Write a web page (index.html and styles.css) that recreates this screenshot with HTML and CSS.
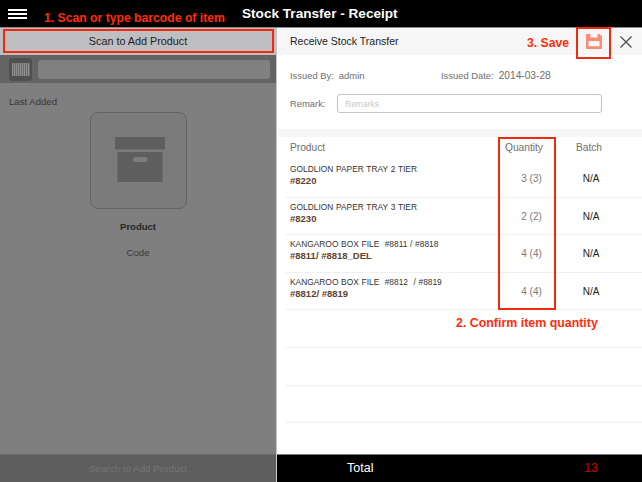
FILE: index.html
```html
<!DOCTYPE html>
<html lang="en">
<head>
<meta charset="utf-8">
<title>Stock Transfer - Receipt</title>
<link rel="stylesheet" href="styles.css">
</head>
<body>
<div class="app">
  <header class="topbar">
    <div class="menu"><span></span><span></span><span></span></div>
    <div class="title">Stock Transfer - Receipt</div>
  </header>
  <div class="main">
    <section class="left">
      <div class="scan-btn">Scan to Add Product</div>
      <div class="search-strip">
        <div class="barcode-btn"><div class="barcode"></div></div>
        <div class="search-field"></div>
      </div>
      <div class="last">
        <div class="last-label">Last Added</div>
        <div class="card">
          <svg class="box" viewBox="0 0 50 45" width="50" height="45">
            <rect x="0" y="0" width="50" height="12.500" fill="#5e5e5e"/>
            <rect x="2.500" y="15" width="45" height="30" fill="#5e5e5e"/>
            <rect x="18" y="20" width="14.500" height="5" rx="2.500" fill="#7d7d7d"/>
          </svg>
        </div>
        <div class="prod-name">Product</div>
        <div class="prod-code">Code</div>
      </div>
      <div class="search-bottom">Search to Add Product</div>
    </section>
    <section class="right">
      <div class="subhead">
        <div class="subhead-title">Receive Stock Transfer</div>
        <svg class="save" viewBox="0 0 16 15" width="16" height="15">
          <path d="M1 0 H4.500 V3.500 H11.500 V0 H13.500 L16 2.500 V14 A1 1 0 0 1 15 15 H1 A1 1 0 0 1 0 14 V1 A1 1 0 0 1 1 0 Z M2.500 7 V12.300 H13.500 V7 Z" fill="#f98c75" fill-rule="evenodd"/>
        </svg>
        <svg class="close" viewBox="0 0 12 12" width="12" height="12">
          <path d="M0.500 0.500 L11.500 11.500 M11.500 0.500 L0.500 11.500" stroke="#4a4a4a" stroke-width="1.200" fill="none"/>
        </svg>
      </div>
      <div class="info">
        <div class="info-row">
          <div class="issued-by"><span class="lbl">Issued By:</span><span class="val">admin</span></div>
          <div class="issued-date"><span class="lbl">Issued Date:</span><span class="val val-date">2014-03-28</span></div>
        </div>
        <div class="remark-row">
          <span class="lbl remark-lbl">Remark:</span>
          <div class="remark-input">Remarks</div>
        </div>
      </div>
      <div class="band"></div>
      <div class="table">
        <div class="thead">
          <div class="c-prod">Product</div>
          <div class="c-qty">Quantity</div>
          <div class="c-batch">Batch</div>
        </div>
        <div class="row">
          <div class="c-prod"><div class="pname">GOLDLION PAPER TRAY 2 TIER</div><div class="pcode">#8220</div></div>
          <div class="c-qty qty">3 (3)</div>
          <div class="c-batch batch">N/A</div>
        </div>
        <div class="row">
          <div class="c-prod"><div class="pname">GOLDLION PAPER TRAY 3 TIER</div><div class="pcode">#8230</div></div>
          <div class="c-qty qty">2 (2)</div>
          <div class="c-batch batch">N/A</div>
        </div>
        <div class="row">
          <div class="c-prod"><div class="pname">KANGAROO BOX FILE &nbsp;#8811 / #8818</div><div class="pcode">#8811/ #8818_DEL</div></div>
          <div class="c-qty qty">4 (4)</div>
          <div class="c-batch batch">N/A</div>
        </div>
        <div class="row">
          <div class="c-prod"><div class="pname">KANGAROO BOX FILE &nbsp;#8812 &nbsp;/ #8819</div><div class="pcode">#8812/ #8819</div></div>
          <div class="c-qty qty">4 (4)</div>
          <div class="c-batch batch">N/A</div>
        </div>
        <div class="row"></div>
        <div class="row"></div>
        <div class="row"></div>
      </div>
      <div class="total-bar">
        <div class="total-lbl">Total</div>
        <div class="total-val">13</div>
      </div>
    </section>
  </div>
  <div class="note note-1">1. Scan or type barcode of item</div>
  <div class="note note-2">2. Confirm item quantity</div>
  <div class="note note-3">3. Save</div>
  <div class="mark mark-scan"></div>
  <div class="mark mark-qty"></div>
  <div class="mark mark-save"></div>
</div>
</body>
</html>
```
FILE: styles.css
```css
* { box-sizing: border-box; }
html, body { margin: 0; padding: 0; }
body { width: 642px; height: 482px; overflow: hidden; background: #fff; font-family: "Liberation Sans", Arial, sans-serif; }
.app { position: relative; width: 642px; height: 482px; display: flex; flex-direction: column; }

.topbar { height: 27px; background: #000; position: relative; flex: none; }
.menu { position: absolute; left: 8px; top: 9px; width: 19px; display: flex; flex-direction: column; gap: 2px; }
.menu span { display: block; height: 2px; background: #fff; }
.title { position: absolute; left: 242px; top: 6px; font-size: 13.600px; font-weight: 700; line-height: 16px; color: #fff; white-space: nowrap; }

.main { display: flex; flex: 1; min-height: 0; border-top: 1px solid #8a8a8a; }
.left { width: 276px; flex: none; display: flex; flex-direction: column; background: #7f7f7f; }
.scan-btn { height: 27px; padding-bottom: 1px; background: #bfbec0; color: #222; font-size: 10.800px; display: flex; align-items: center; justify-content: center; }
.search-strip { height: 28px; background: #646464; display: flex; align-items: center; padding-left: 9px; gap: 6px; }
.barcode-btn { width: 23px; height: 23px; background: #505050; border-radius: 3px; display: flex; align-items: center; justify-content: center; flex: none; }
.barcode { width: 18px; height: 13px; background: repeating-linear-gradient(90deg, #8f8f8f 0 1px, #6c6c6c 1px 2px); }
.search-field { width: 232px; height: 19px; background: #808080; border-radius: 3px; flex: none; }
.last { flex: 1; position: relative; display: flex; flex-direction: column; align-items: center; }
.last-label { align-self: flex-start; margin: 13px 0 0 9px; font-size: 9.600px; line-height: 12px; color: #363636; }
.card { width: 97px; height: 97px; margin-top: 4px; border: 1px solid #646464; border-radius: 8px; background: #7b7b7b; display: flex; align-items: center; justify-content: center; }
.box { display: block; margin-left: 4px; margin-bottom: 2px; }
.prod-name { margin-top: 12px; font-size: 9.500px; font-weight: 700; line-height: 12px; color: #262626; }
.prod-code { margin-top: 14px; font-size: 9.700px; line-height: 12px; color: #3c3c3c; }
.search-bottom { height: 28px; flex: none; background: #5e5e5e; border-top: 1px solid #6d6d6d; color: #747474; font-size: 9.800px; display: flex; align-items: center; justify-content: center; }

.right { flex: 1; min-width: 0; display: flex; flex-direction: column; border-left: 1px solid #c8c8c8; background: #fff; position: relative; }
.subhead { height: 27px; padding: 0 0 1px 13px; background: #f6f6f6; position: relative; display: flex; align-items: center; flex: none; }
.subhead-title { font-size: 10.500px; color: #222; }
.save { position: absolute; left: 309px; top: 6px; }
.close { position: absolute; left: 343px; top: 8px; }
.info { height: 74px; flex: none; padding: 15px 0 0 13px; font-size: 9.400px; color: #6f6f6f; }
.info-row { display: flex; line-height: 12px; }
.issued-by { width: 151px; }
.lbl { color: #6f6f6f; }
.val { margin-left: 5px; color: #6f6f6f; font-size: 9.500px; }
.val-date { font-size: 10.200px; }
.remark-row { margin-top: 12px; display: flex; align-items: center; }
.remark-lbl { width: 47px; flex: none; }
.remark-input { width: 265px; height: 19px; border: 1px solid #c4c4c4; border-radius: 3px; color: #c9c9c9; font-size: 8.500px; padding-left: 7px; display: flex; align-items: center; }
.band { height: 8px; background: #f6f6f6; flex: none; }

.table { flex: 1; min-height: 0; padding-left: 9px; }
.thead { height: 23px; padding-bottom: 2px; display: flex; align-items: center; font-size: 10.200px; color: #6f6f6f; }
.row { height: 37.600px; display: flex; border-bottom: 1px solid #efefef; }
.c-prod { width: 218px; padding-left: 4px; flex: none; }
.c-qty { width: 57px; text-align: center; flex: none; }
.c-batch { width: 64px; text-align: center; flex: none; }
.thead .c-qty { padding-right: 17px; }
.thead .c-batch { padding-right: 8px; }
.pname { font-size: 8.400px; line-height: 12px; color: #333; white-space: nowrap; margin-top: 3px; word-spacing: 0.400px; }
.pcode { font-size: 9.500px; font-weight: 700; line-height: 12px; color: #5f432c; white-space: nowrap; }
.qty { font-size: 10px; color: #7a7a7a; line-height: 12px; padding-top: 13px; padding-right: 2px; }
.batch { font-size: 10px; color: #222; line-height: 12px; padding-top: 13px; padding-right: 4px; }

.total-bar { height: 28px; flex: none; background: #000; border-top: 1px solid #777; position: relative; font-size: 12.500px; }
.total-lbl { position: absolute; left: 70px; top: 6px; color: #fff; line-height: 15px; }
.total-val { position: absolute; left: 307px; top: 6px; color: #c80000; line-height: 15px; }

.note { position: absolute; color: #ff2d0a; font-weight: 700; font-size: 12.200px; line-height: 14px; white-space: nowrap; }
.note-1 { left: 44px; top: 11px; }
.note-2 { left: 456px; top: 316px; font-size: 12.400px; }
.note-3 { left: 527px; top: 36px; }
.mark { position: absolute; border: 2px solid #f0290f; }
.mark-scan { left: 3px; top: 29px; width: 271px; height: 24px; }
.mark-qty { left: 498px; top: 137px; width: 58px; height: 173px; }
.mark-save { left: 576px; top: 27px; width: 35px; height: 32px; }
```
